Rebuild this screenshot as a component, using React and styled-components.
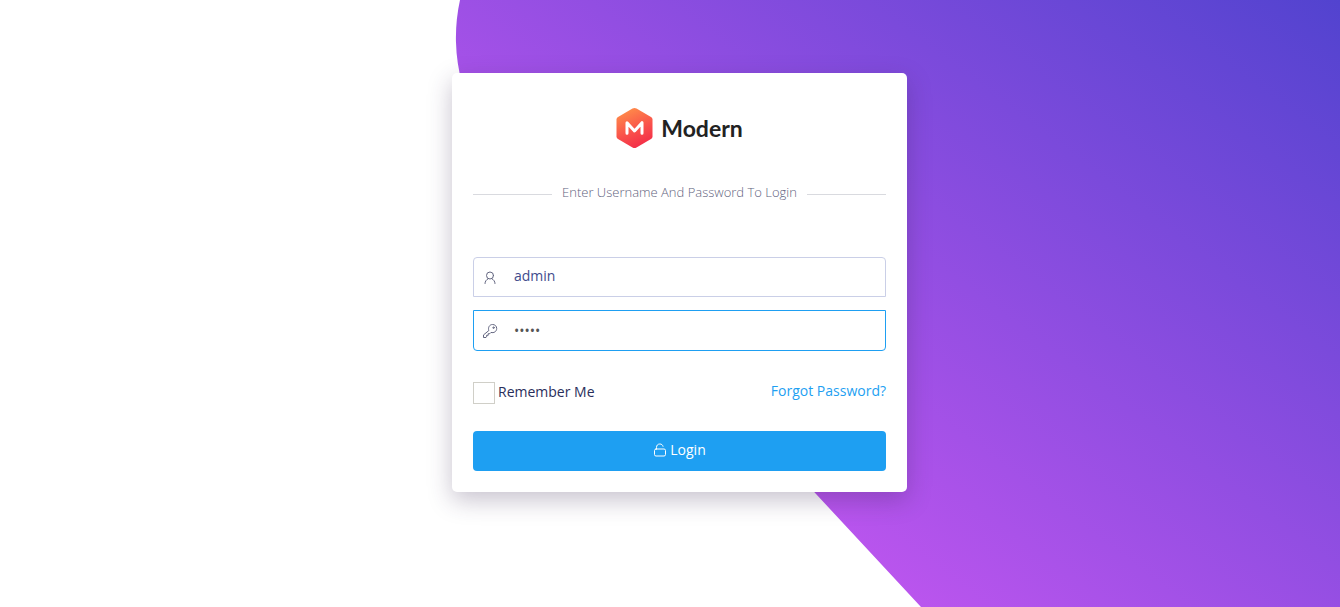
import React from "react";
import styled, { createGlobalStyle } from "styled-components";

const GlobalStyle = createGlobalStyle`
  *, *::before, *::after { box-sizing: border-box; }
  html, body, #root { height: 100%; }
  body {
    margin: 0;
    background: #fff;
    color: #2a2e5b;
    font: 14px/20px "Open Sans", "Noto Sans", sans-serif;
  }
`;

const Page = styled.main`
  position: relative;
  min-height: 100%;
  display: flex;
  justify-content: center;
  align-items: flex-start;
  padding: 73px 0 72px 19px;
  overflow: hidden;
`;

const Backdrop = styled.svg`
  position: absolute;
  inset: 0;
  width: 100%;
  height: 100%;
`;

const Card = styled.section`
  position: relative;
  width: 100%;
  max-width: 455px;
  padding: 33px 21px 21px;
  background: #fff;
  border-radius: 5px;
  box-shadow: 0 8px 24px rgba(55, 35, 80, 0.28);
`;

const Brand = styled.h1`
  display: flex;
  justify-content: center;
  align-items: center;
  gap: 8px;
  height: 44px;
  margin: 0;
  color: #222;
  font: 700 23px/28px Lato, sans-serif;
`;

const Divider = styled.p`
  display: flex;
  align-items: center;
  gap: 10px;
  margin: 32px 0 55px;
  color: #5f637e;
  font: 300 13px/20px "Open Sans", sans-serif;
  white-space: nowrap;

  &::before, &::after {
    content: "";
    flex: 1;
    height: 1px;
    margin-top: 4px;
    background: #d9dadf;
  }
`;

const Field = styled.label`
  position: relative;
  display: block;
  margin-bottom: 13px;
  color: #62657f;
`;

const FieldIcon = styled.svg`
  position: absolute;
  left: 9px;
  top: 13px;
  width: 16px;
  height: 16px;
`;

const Input = styled.input`
  display: block;
  width: 100%;
  height: ${(p) => (p.$active ? 41 : 40)}px;
  padding: ${(p) => (p.$active ? "9px 12px 9px 40px" : "8px 12px 11px 40px")};
  border: 1px solid ${(p) => (p.$active ? "#1e9ff2" : "#cacfe7")};
  border-radius: ${(p) => (p.$active ? "0 0 4px 4px" : "4px 4px 0 0")};
  outline: none;
  background: #fff;
  color: ${(p) => (p.$active ? "#555" : "#414b8c")};
  font: inherit;
`;

const Options = styled.div`
  display: flex;
  justify-content: space-between;
  margin: 31px 0 27px;
  height: 22px;
`;

const Remember = styled.label`
  display: flex;
  align-items: flex-start;
  gap: 3px;
`;

const Checkbox = styled.input`
  appearance: none;
  width: 22px;
  height: 22px;
  margin: 0;
  border: 1px solid #d0cfc8;
  background: #fff;
`;

const Forgot = styled.a`
  color: #1e9ff2;
  line-height: 18px;
  text-decoration: none;
`;

const LoginButton = styled.button`
  display: flex;
  justify-content: center;
  align-items: center;
  gap: 3px;
  width: 100%;
  height: 40px;
  padding: 0 0 2px;
  border: 0;
  border-radius: 4px;
  background: #1e9ff2;
  color: #fff;
  font: inherit;
`;

const stroke = {
  fill: "none",
  stroke: "currentColor",
  strokeLinecap: "round",
  strokeLinejoin: "round",
};

function LogoMark() {
  return (
    <svg width="37" height="42" viewBox="0 0 37 42" aria-hidden="true">
      <defs>
        <linearGradient id="mark" x1="0.2" y1="0" x2="0.6" y2="1">
          <stop offset="0" stopColor="#ff9149" />
          <stop offset="0.6" stopColor="#f9504b" />
          <stop offset="1" stopColor="#f32d48" />
        </linearGradient>
      </defs>
      <path
        d="M16.5 1.6Q18.5.5 20.5 1.6L35 9.9Q36.5 10.8 36.5 12.5V29.5Q36.5 31 35 32L20.5 40.4Q18.5 41.5 16.5 40.4L2 32Q.5 31 .5 29.5V12.5Q.5 10.8 2 9.9Z"
        fill="url(#mark)"
      />
      <path
        d="M11 26.3V15.7L18.5 24L26 15.7V26.3"
        fill="none"
        stroke="#fff"
        strokeWidth="3"
        strokeLinecap="round"
        strokeLinejoin="round"
      />
    </svg>
  );
}

export default function App() {
  return (
    <>
      <GlobalStyle />
      <Page>
        <Backdrop viewBox="0 0 1340 607" preserveAspectRatio="xMidYMid slice" aria-hidden="true">
          <defs>
            <linearGradient id="sweep" gradientUnits="userSpaceOnUse" x1="900" y1="600" x2="1349" y2="6">
              <stop offset="0" stopColor="#bb55ee" />
              <stop offset="1" stopColor="#5243cf" />
            </linearGradient>
          </defs>
          <path d="M460 0A175 175 0 0 0 503 157L921 607H1340V0Z" fill="url(#sweep)" />
        </Backdrop>
        <Card>
          <Brand>
            <LogoMark />
            Modern
          </Brand>
          <Divider>Enter Username And Password To Login</Divider>
          <form onSubmit={(e) => e.preventDefault()}>
            <Field>
              <Input type="text" aria-label="Username" defaultValue="admin" />
              <FieldIcon viewBox="0 0 16 16" aria-hidden="true" {...stroke}>
                <circle cx="8" cy="5.5" r="3.5" />
                <path d="M3 13.5C3 11.5 4.2 9.7 6.2 8.7M9.8 8.7C11.8 9.7 13 11.5 13 13.5" />
              </FieldIcon>
            </Field>
            <Field>
              <Input $active type="password" aria-label="Password" defaultValue="admin" />
              <FieldIcon viewBox="0 0 16 16" aria-hidden="true" {...stroke}>
                <path d="M6.7 7.2C5.8 4.5 7.5 1.5 10.5 1.5C13 1.5 14.7 3.2 14.7 5.5C14.7 8.5 11.8 10.3 9 9.4L7.8 10.7H6.2V12.3H4.6V13.9L4 14.5H1.5V12.3Z" />
                <circle cx="11.5" cy="4.7" r="0.7" />
              </FieldIcon>
            </Field>
            <Options>
              <Remember>
                <Checkbox type="checkbox" />
                Remember Me
              </Remember>
              <Forgot href="#forgot">Forgot Password?</Forgot>
            </Options>
            <LoginButton type="submit">
              <svg width="14" height="14" viewBox="0 0 14 14" aria-hidden="true" {...stroke}>
                <path d="M3.5 6V4.5C3.5 2.3 4.8 1 6.8 1C8.5 1 9.6 1.8 10 3.3" />
                <rect x="1.5" y="6" width="11" height="7" rx="1.5" />
              </svg>
              Login
            </LoginButton>
          </form>
        </Card>
      </Page>
    </>
  );
}
